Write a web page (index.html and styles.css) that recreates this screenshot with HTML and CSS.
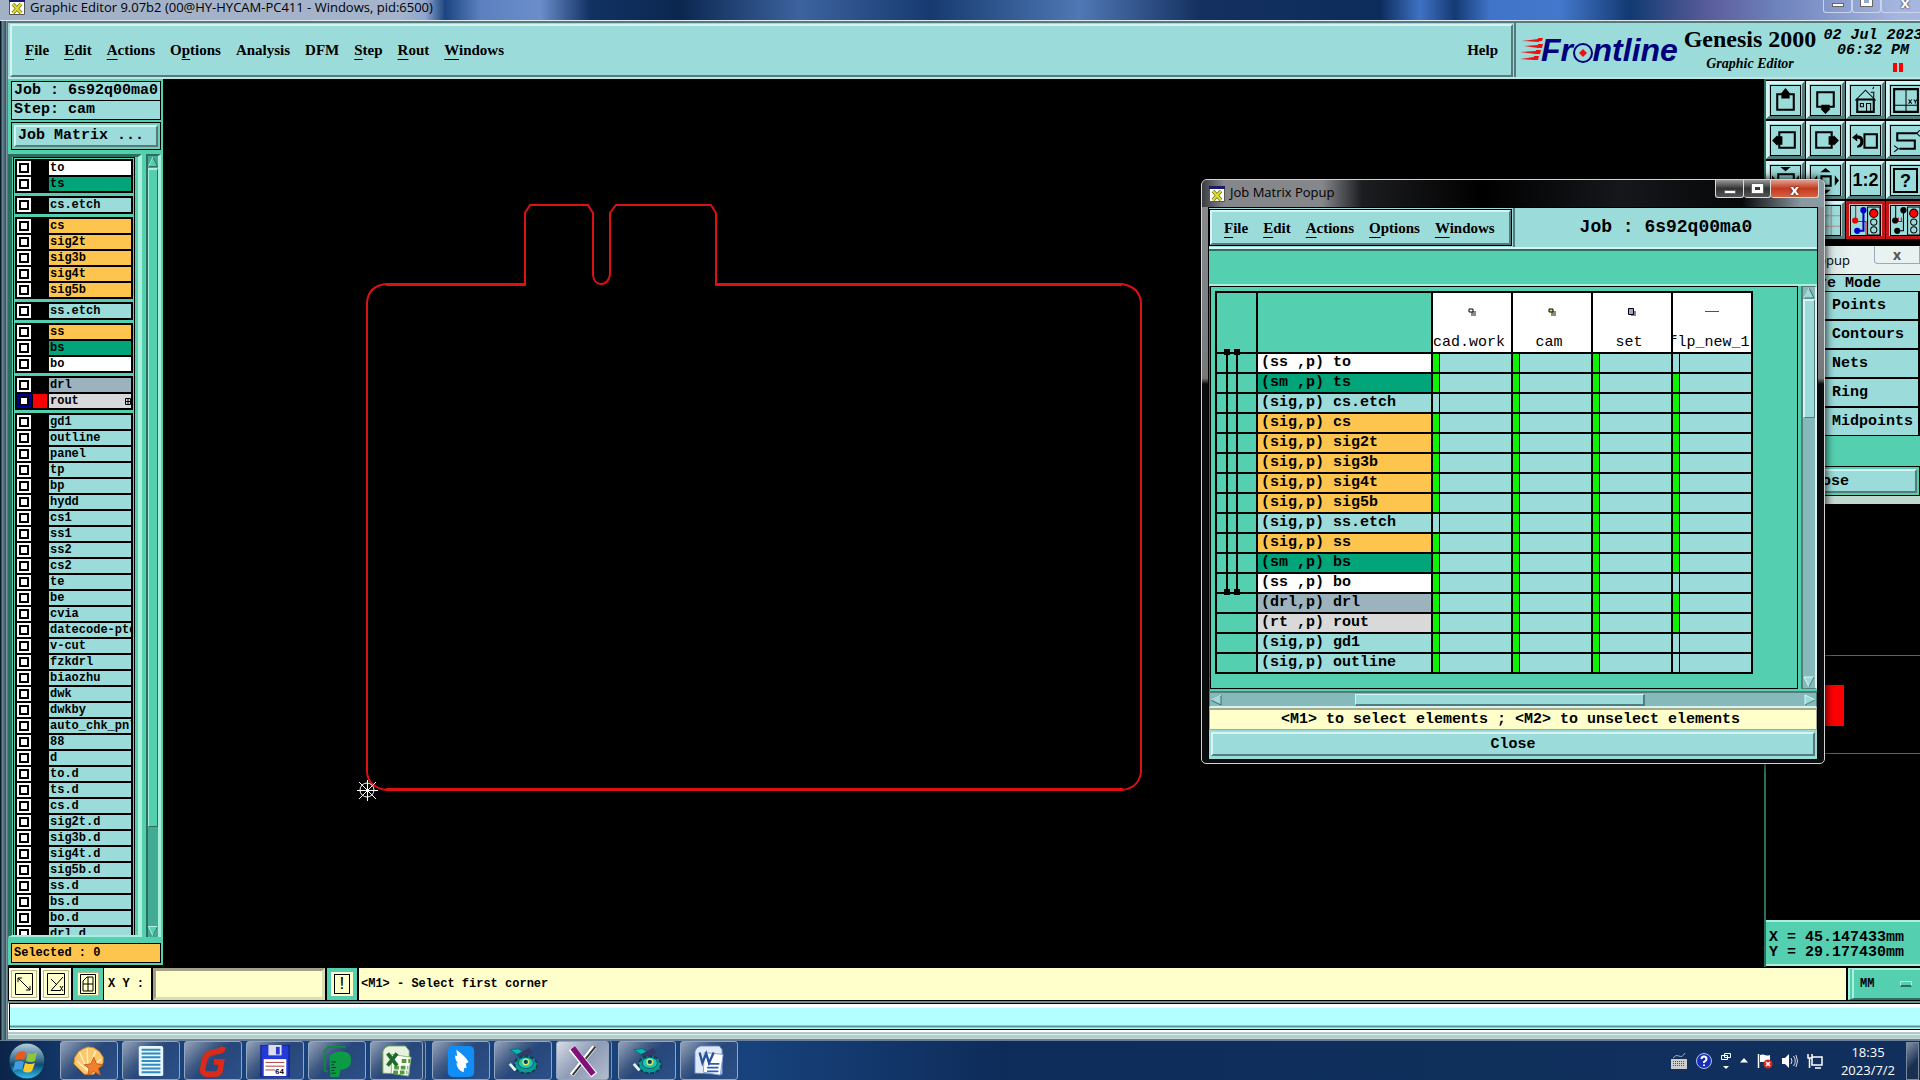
FILE: index.html
```html
<!DOCTYPE html>
<html lang="en">
<head>
<meta charset="utf-8">
<title>Graphic Editor</title>
<link rel="stylesheet" href="styles.css">
</head>
<body>
<svg class="defs" aria-hidden="true">
  <defs>
    <linearGradient id="orb" x1="0" y1="0" x2="0" y2="1"><stop offset="0" stop-color="#b9cfdd"/><stop offset=".45" stop-color="#3f7493"/><stop offset=".6" stop-color="#0f4a70"/><stop offset="1" stop-color="#2fc4f5"/></linearGradient>
    <symbol id="xwin" viewBox="0 0 16 16"><path fill="#fff" stroke="#555" d="M.5.5h15v15H.5z"/><path fill="#1a1a6a" d="M0 0h16v3H0z"/><path fill="none" stroke="#777722" stroke-width="3.600" d="M4 5l8 9M12 5l-8 9"/><path fill="none" stroke="#dddd33" stroke-width="2" d="M4 5l8 9M12 5l-8 9"/></symbol>
    <symbol id="gear" viewBox="0 0 34 34"><path fill="#0bb" stroke="#076" d="M3 5l9-1 6 4-6 3z"/><path fill="#333a66" d="M10 10l14-7 3 5-12 6z"/><ellipse cx="20" cy="21" rx="12" ry="9" fill="#0a9c94" stroke="#123a55" stroke-width="2" stroke-dasharray="4 2"/><ellipse cx="20" cy="19" rx="8" ry="6" fill="#19c8b4" stroke="#0a5560"/><circle cx="20" cy="18" r="3" fill="#045" stroke="#e8e060" stroke-width="1.500"/><path stroke="#e8f4f4" stroke-width="3" d="M3 20l6 7"/></symbol>
  </defs>
</svg>

<main class="window">
  <header class="titlebar">
    <svg class="xicon" width="16" height="16"><use href="#xwin"/></svg>
    <span>Graphic Editor 9.07b2 (00@HY-HYCAM-PC411 - Windows, pid:6500)</span>
    <div class="winbtns"><button aria-label="Minimize"><i class="min"></i></button><button aria-label="Maximize"><i class="max"></i></button><button aria-label="Close">x</button></div>
  </header>

  <div class="topbar">
    <nav class="menubar">
      <button><u>F</u>ile</button><button><u>E</u>dit</button><button><u>A</u>ctions</button><button>O<u>p</u>tions</button><button>Analysis</button><button>DFM</button><button><u>S</u>tep</button><button><u>R</u>out</button><button><u>W</u>indows</button><button class="help">Help</button>
    </nav>
    <div class="brand">
      <svg class="logo" width="162" height="32" viewBox="0 0 162 32">
        <path fill="#e11" d="M2 6l16-2v-1h5l-1 3h-3v1zM4 11l14-1v-1h5l-1 4h-4zM0 17l16-1v-1h5l-1 4h-4zM0 24l14-2v-1h5l-1 4h-4z"/>
        <text x="21" y="26">Fr<tspan fill="none">o</tspan>ntline</text>
        <circle cx="63" cy="18" r="9" fill="none" stroke="#00007c" stroke-width="2"/>
        <path fill="#e11" d="M63 14l4 4-4 4-4-4z"/>
      </svg>
      <div class="product"><strong>Genesis 2000</strong><em>Graphic Editor</em></div>
      <div class="clock"><span>02 Jul 2023</span><span>06:32 PM</span><i class="pause"></i></div>
    </div>
  </div>

  <div class="work">
    <aside class="panel">
      <div class="field">Job : 6s92q00ma0</div>
      <div class="field step">Step: cam</div>
      <div class="matrixbox"><button>Job Matrix ...</button></div>
      <div class="lists">
        <div class="frame"><div class="layers">
          <div class="grp">
            <label class="ss"><input type="checkbox"><i></i><span>to</span></label>
            <label class="sm"><input type="checkbox"><i></i><span>ts</span></label>
          </div>
          <div class="grp">
            <label><input type="checkbox"><i></i><span>cs.etch</span></label>
          </div>
          <div class="grp">
            <label class="sig"><input type="checkbox"><i></i><span>cs</span></label>
            <label class="sig"><input type="checkbox"><i></i><span>sig2t</span></label>
            <label class="sig"><input type="checkbox"><i></i><span>sig3b</span></label>
            <label class="sig"><input type="checkbox"><i></i><span>sig4t</span></label>
            <label class="sig"><input type="checkbox"><i></i><span>sig5b</span></label>
          </div>
          <div class="grp">
            <label><input type="checkbox"><i></i><span>ss.etch</span></label>
          </div>
          <div class="grp">
            <label class="sig"><input type="checkbox"><i></i><span>ss</span></label>
            <label class="sm"><input type="checkbox"><i></i><span>bs</span></label>
            <label class="ss"><input type="checkbox"><i></i><span>bo</span></label>
          </div>
          <div class="grp">
            <label class="drl"><input type="checkbox"><i></i><span>drl</span></label>
            <label class="rt"><input type="checkbox" checked><i></i><span>rout<svg width="6" height="7" viewBox="0 0 6 7"><path fill="none" stroke="#000" d="M.5.5h5v6h-5zM3 0v7M0 3.500h6"/></svg></span></label>
          </div>
          <div class="grp">
            <label><input type="checkbox"><i></i><span>gd1</span></label>
            <label><input type="checkbox"><i></i><span>outline</span></label>
            <label><input type="checkbox"><i></i><span>panel</span></label>
            <label><input type="checkbox"><i></i><span>tp</span></label>
            <label><input type="checkbox"><i></i><span>bp</span></label>
            <label><input type="checkbox"><i></i><span>hydd</span></label>
            <label><input type="checkbox"><i></i><span>cs1</span></label>
            <label><input type="checkbox"><i></i><span>ss1</span></label>
            <label><input type="checkbox"><i></i><span>ss2</span></label>
            <label><input type="checkbox"><i></i><span>cs2</span></label>
            <label><input type="checkbox"><i></i><span>te</span></label>
            <label><input type="checkbox"><i></i><span>be</span></label>
            <label><input type="checkbox"><i></i><span>cvia</span></label>
            <label><input type="checkbox"><i></i><span>datecode-ptd</span></label>
            <label><input type="checkbox"><i></i><span>v-cut</span></label>
            <label><input type="checkbox"><i></i><span>fzkdrl</span></label>
            <label><input type="checkbox"><i></i><span>biaozhu</span></label>
            <label><input type="checkbox"><i></i><span>dwk</span></label>
            <label><input type="checkbox"><i></i><span>dwkby</span></label>
            <label><input type="checkbox"><i></i><span>auto_chk_pnl</span></label>
            <label><input type="checkbox"><i></i><span>88</span></label>
            <label><input type="checkbox"><i></i><span>d</span></label>
            <label><input type="checkbox"><i></i><span>to.d</span></label>
            <label><input type="checkbox"><i></i><span>ts.d</span></label>
            <label><input type="checkbox"><i></i><span>cs.d</span></label>
            <label><input type="checkbox"><i></i><span>sig2t.d</span></label>
            <label><input type="checkbox"><i></i><span>sig3b.d</span></label>
            <label><input type="checkbox"><i></i><span>sig4t.d</span></label>
            <label><input type="checkbox"><i></i><span>sig5b.d</span></label>
            <label><input type="checkbox"><i></i><span>ss.d</span></label>
            <label><input type="checkbox"><i></i><span>bs.d</span></label>
            <label><input type="checkbox"><i></i><span>bo.d</span></label>
            <label><input type="checkbox"><i></i><span>drl.d</span></label>
          </div>
        </div></div>
        <div class="vscroll green">
          <svg width="10" height="11" viewBox="0 0 10 11"><path fill="#54cfb0" stroke="#2b6f5e" d="M5 1L.5 10.500h9z"/><path fill="none" stroke="#b0f3e0" d="M5 1L.5 10.500"/></svg>
          <i class="thumb"></i><i class="trough"></i>
          <svg width="10" height="11" viewBox="0 0 10 11"><path fill="#54cfb0" stroke="#b0f3e0" d="M5 10L.5.5h9z"/><path fill="none" stroke="#2b6f5e" d="M5 10L9.500.5"/></svg>
        </div>
      </div>
      <div class="selected">Selected : 0</div>
    </aside>

    <section class="canvas">
      <svg viewBox="163 79 1601 888" preserveAspectRatio="xMinYMin meet" fill="none" stroke="#dd1111">
        <path stroke-width="3" d="M386 284.500H526M715 284.500h407M386 789.500h737"/>
        <path stroke-width="2" d="M525 285V213l5-8h58l5 8v62q1 9 8 9t9-9v-62l6-8h95l5 8v72M386 284q-18 2-19 19V772q1 15 19 18M1122 790q17-2 19-18V303q-1-16-19-19"/>
        <g stroke="#fff"><circle cx="367" cy="790" r="7"/><path d="M357 790.500h21M367.500 780v21M359 782l17 17M376 782l-17 17"/></g>
      </svg>
    </section>

    <aside class="right">
      <div class="tools">
        <button aria-label="Pan up"><svg viewBox="0 0 30 30"><path class="k" d="M7 9h16v15H7z"/><path class="f" d="M15 3l5 6h-1v4h-8V9h-1z"/></svg></button>
        <button aria-label="Pan down"><svg viewBox="0 0 30 30"><path class="k" d="M7 7h16v14H7z"/><path class="f" d="M15 28l5-5h-1v-4h-8v4h-1z"/></svg></button>
        <button aria-label="Home"><svg viewBox="0 0 30 30"><path class="n" d="M5 15L15 5l10 10M23 12V7h-3M22 4l1-2"/><path class="k" d="M7 14h16v12H7z"/><path class="n" d="M10 18h3v3h-3zM16 26v-8h4v8"/></svg></button>
        <button aria-label="Zoom window"><svg viewBox="0 0 30 30"><path class="k" d="M4 4h23v22H4z"/><path class="n" d="M15.500 4v22M4 19.500h23M18 14l3 4M21 14l-3 4M23 14l1.500 2L26 14M24.500 16v2"/></svg></button>
        <button aria-label="Pan left"><svg viewBox="0 0 30 30"><path class="k" d="M9 7h15v15H9z"/><path class="f" d="M2 15l5-5v1h5v8H7v1z"/></svg></button>
        <button aria-label="Pan right"><svg viewBox="0 0 30 30"><path class="k" d="M6 7h15v15H6z"/><path class="f" d="M28 15l-5-5v1h-5v8h5v1z"/></svg></button>
        <button aria-label="Previous view"><svg viewBox="0 0 30 30"><path class="k" d="M14 9h12v13H14z"/><path class="f" d="M2 12l5-4v2q6 0 6 6t-6 6v-2q3-1 3-4t-3-3v3z"/></svg></button>
        <button aria-label="Route"><svg viewBox="0 0 30 30"><path class="k" d="M26 8H7v7h17v8H9"/><path class="n" d="M29 5l-3 3 3 3M4 20l4 3-4 3"/></svg></button>
        <button aria-label="Zoom in"><svg viewBox="0 0 30 30"><path class="k" d="M8 9h15v13H8z"/><path class="f" d="M15 6l-5-4h10zM2 10l4 5-4 5zM28 10l-4 5 4 5z"/></svg></button>
        <button aria-label="Zoom out"><svg viewBox="0 0 30 30"><path class="k" d="M11 11h9v9h-9z"/><path class="f" d="M15 3l5 4H10zM15 28l5-4H10zM3 15l4-5v10zM28 15l-4-5v10z"/></svg></button>
        <button class="lbl"><b>1:2</b></button>
        <button class="lbl q"><b><span>?</span></b></button>
        <button aria-label="Grid"><svg viewBox="0 0 30 30"><path fill="none" stroke="#6d8f9a" d="M0 10.500h30M0 20.500h30M10.500 0v30M20.500 0v30"/></svg></button>
        <button aria-label="Grid snap"><svg viewBox="0 0 30 30"><path fill="none" stroke="#b08a8a" d="M0 10.500h30M0 20.500h30M10.500 0v30M20.500 0v30"/></svg></button>
        <button class="stop" aria-label="Net stop"><svg viewBox="0 0 30 30"><path fill="none" stroke="#e00" d="M5.500 0v16h10v14"/><path fill="none" stroke="#00c" stroke-width="2" d="M13 5v20H7"/><g fill="#00c"><circle cx="13" cy="5" r="3"/><circle cx="7" cy="25" r="3"/></g><circle cx="5" cy="15" r="3" fill="#e00"/><path class="n" d="M17 2h12v27H17z"/><circle cx="23" cy="8" r="4" fill="#f00" stroke="#000"/><g class="n"><circle cx="23" cy="16.500" r="3"/><circle cx="23" cy="24" r="3"/></g></svg></button>
        <button class="stop" aria-label="Spacing stop"><svg viewBox="0 0 30 30"><path class="n" d="M5.500 0v14M13 5v20H7"/><path stroke="#e00" fill="none" d="M6 16h6M8 12v4M11 12v4"/><circle cx="13" cy="5" r="3"/><circle cx="7" cy="25" r="3"/><circle cx="5" cy="15" r="3"/><path class="n" d="M17 2h12v27H17z"/><circle cx="23" cy="8" r="4" fill="#f00" stroke="#000"/><g class="n"><circle cx="23" cy="16.500" r="3"/><circle cx="23" cy="24" r="3"/></g></svg></button>
      </div>
      <div class="overview"><svg viewBox="0 0 154 678" preserveAspectRatio="xMinYMin meet"><path fill="#f00" d="M20 444h58v41H20z"/><path stroke="#477a2c" fill="none" d="M0 414.500h154M0 512.500h154"/></svg></div>
      <div class="coords"><span>X = 45.147433mm</span><span>Y = 29.177430mm</span></div>
    </aside>
  </div>

  <div class="entry">
    <button class="mode" aria-label="Absolute"><svg viewBox="0 0 20 24"><path class="n" d="M1.500 1.500h17v21h-17zM4 6l12 12M4 10V6h4M16 14v4h-4"/></svg></button>
    <button class="mode" aria-label="Angle"><svg viewBox="0 0 20 24"><path class="n" d="M1.500 1.500h17v21h-17zM17 5L5 18.500h9M5 7l6 6M14 14l3 5M17 14l-3 5"/></svg></button>
    <button class="mode on" aria-label="Grid snap"><svg viewBox="0 0 20 24"><path class="n" d="M2.500 2.500h15v19h-15zM5 9l4-4h6v14H5zM10 5v14M5 12h10"/></svg></button>
    <label for="xy">X Y :</label>
    <input id="xy" type="text">
    <button class="bang"><b>!</b></button>
    <output>&lt;M1&gt; - Select first corner</output>
    <button class="units">MM<i></i></button>
  </div>
  <div class="status"><div></div></div>
</main>

<section class="pop mode-pop">
  <header><span>Mode Popup</span><button aria-label="Close">x</button></header>
  <h2>Measure Mode</h2>
  <button>Points</button><button>Contours</button><button>Nets</button><button>Ring</button><button>Midpoints</button>
  <footer><button>Close</button></footer>
</section>

<section class="pop matrix">
  <header><svg class="xicon" width="16" height="16"><use href="#xwin"/></svg><span>Job Matrix Popup</span>
    <div class="winbtns"><button aria-label="Minimize"><i class="min"></i></button><button aria-label="Maximize"><i class="max"></i></button><button class="close" aria-label="Close">x</button></div>
  </header>
  <div class="body">
    <div class="mrow">
      <nav><button><u>F</u>ile</button><button><u>E</u>dit</button><button><u>A</u>ctions</button><button><u>O</u>ptions</button><button><u>W</u>indows</button></nav>
      <div class="job">Job : 6s92q00ma0</div>
    </div>
    <div class="band"></div>
    <div class="sheet">
      <div class="tablebox">
        <table>
          <colgroup><col class="c1"><col class="c2"><col><col><col><col></colgroup>
          <thead><tr><th></th><th></th>
            <th scope="col"><svg width="8" height="8" viewBox="0 0 8 8"><path fill="#888" d="M3 3h5v5H3z"/><path fill="#fff" stroke="#000" d="M1 1h4v3H1z"/></svg><span>cad.work</span></th>
            <th scope="col"><svg width="8" height="8" viewBox="0 0 8 8"><path fill="#888" d="M3 3h5v5H3z"/><path fill="#dd4" stroke="#000" d="M1 1h4v3H1z"/></svg><span>cam</span></th>
            <th scope="col"><svg width="8" height="8" viewBox="0 0 8 8"><path fill="#888" d="M3 3h5v5H3z"/><path fill="#b79ad0" stroke="#000" d="M.5.5h5v6h-5z"/></svg><span>set</span></th>
            <th scope="col"><svg width="14" height="8" viewBox="0 0 14 8"><path stroke="#b22" d="M0 3.500h14"/></svg><span>flp_new_1</span></th></tr></thead>
          <tbody>
            <tr class="ss"><td></td><th scope="row">(ss ,p) to</th><td class="g"></td><td class="g"></td><td class="g"></td><td></td></tr>
            <tr class="sm"><td></td><th scope="row">(sm ,p) ts</th><td class="g"></td><td class="g"></td><td class="g"></td><td class="g"></td></tr>
            <tr><td></td><th scope="row">(sig,p) cs.etch</th><td></td><td class="g"></td><td class="g"></td><td class="g"></td></tr>
            <tr class="sig"><td></td><th scope="row">(sig,p) cs</th><td class="g"></td><td class="g"></td><td class="g"></td><td class="g"></td></tr>
            <tr class="sig"><td></td><th scope="row">(sig,p) sig2t</th><td class="g"></td><td class="g"></td><td class="g"></td><td class="g"></td></tr>
            <tr class="sig"><td></td><th scope="row">(sig,p) sig3b</th><td class="g"></td><td class="g"></td><td class="g"></td><td class="g"></td></tr>
            <tr class="sig"><td></td><th scope="row">(sig,p) sig4t</th><td class="g"></td><td class="g"></td><td class="g"></td><td class="g"></td></tr>
            <tr class="sig"><td></td><th scope="row">(sig,p) sig5b</th><td class="g"></td><td class="g"></td><td class="g"></td><td class="g"></td></tr>
            <tr><td></td><th scope="row">(sig,p) ss.etch</th><td></td><td class="g"></td><td class="g"></td><td class="g"></td></tr>
            <tr class="sig"><td></td><th scope="row">(sig,p) ss</th><td class="g"></td><td class="g"></td><td class="g"></td><td class="g"></td></tr>
            <tr class="sm"><td></td><th scope="row">(sm ,p) bs</th><td class="g"></td><td class="g"></td><td class="g"></td><td class="g"></td></tr>
            <tr class="ss"><td></td><th scope="row">(ss ,p) bo</th><td class="g"></td><td class="g"></td><td class="g"></td><td></td></tr>
            <tr class="drl"><td></td><th scope="row">(drl,p) drl</th><td class="g"></td><td class="g"></td><td class="g"></td><td class="g"></td></tr>
            <tr class="rt"><td></td><th scope="row">(rt ,p) rout</th><td class="g"></td><td class="g"></td><td class="g"></td><td class="g"></td></tr>
            <tr><td></td><th scope="row">(sig,p) gd1</th><td class="g"></td><td class="g"></td><td class="g"></td><td></td></tr>
            <tr><td></td><th scope="row">(sig,p) outline</th><td class="g"></td><td class="g"></td><td class="g"></td><td></td></tr>
          </tbody>
        </table>
        <svg class="span" width="40" height="382" viewBox="0 0 40 382"><path d="M8 58h6v6H8zM18 58h6v6h-6zM10 61h2v240h-2zM20 61h2v240h-2zM8 298h6v6H8zM18 298h6v6h-6z"/></svg>
      </div>
      <div class="vscroll cyan">
        <svg width="12" height="12" viewBox="0 0 12 12"><path fill="#9bdbda" stroke="#466" d="M6 1L1 11h10z"/><path fill="none" stroke="#d8f8f8" d="M6 1L1 11"/></svg>
        <i class="thumb"></i><i class="trough"></i>
        <svg width="12" height="12" viewBox="0 0 12 12"><path fill="#9bdbda" stroke="#d8f8f8" d="M6 11L1 1h10z"/><path fill="none" stroke="#466" d="M6 11L11 1"/></svg>
      </div>
    </div>
    <div class="hscroll">
      <svg width="12" height="12" viewBox="0 0 12 12"><path fill="#9bdbda" stroke="#466" d="M1 6L11 1v10z"/><path fill="none" stroke="#d8f8f8" d="M1 6L11 1"/></svg>
      <i class="thumb"></i>
      <svg width="12" height="12" viewBox="0 0 12 12"><path fill="#9bdbda" stroke="#d8f8f8" d="M11 6L1 1v10z"/><path fill="none" stroke="#466" d="M1 11L11 6"/></svg>
    </div>
    <p>&lt;M1&gt; to select elements ; &lt;M2&gt; to unselect elements</p>
    <div class="closebox"><button>Close</button></div>
  </div>
</section>

<footer class="taskbar">
  <button class="start" aria-label="Start"><svg width="38" height="38" viewBox="0 0 38 38"><circle cx="19" cy="19" r="18" fill="url(#orb)" stroke="#0b2c4a"/><path fill="#e8581f" d="M9 11q5-3 9-1l-2 8q-4-2-9 0z"/><path fill="#8fc53a" d="M20 11q5 2 9-1l-2 9q-4 2-9 0z"/><path fill="#3f9fe0" d="M7 20q5-2 9 0l-2 8q-5-2-9 1z"/><path fill="#fbc92c" d="M17 21q5 2 10 0l-3 8q-4 3-9 0z"/></svg></button>
  <nav class="apps">
    <button aria-label="Shell"><svg viewBox="0 0 34 34"><path fill="#fbc86b" stroke="#d98d2b" d="M12 31L1 20l1-7 4-6 5-3 5-2 6 1 6 4 4 6v6L22 31z"/><path stroke="#fff0c8" stroke-width="1.500" d="M16 28L4 17M16 28L7 8M16 28L15 4M16 28L24 6M16 28l14-13"/><path fill="#f08030" stroke="#c85a10" d="M22 13l3 7 7 1-5 4 2 7-7-4-6 4 1-7-5-4 7-1z"/></svg></button>
    <button aria-label="Notes"><svg viewBox="0 0 34 34"><rect x="4" y="1" width="26" height="32" rx="2" fill="#e8f6fc"/><path stroke="#2f8cbd" stroke-width="2" d="M7 5h20M7 9h20M7 13h20M7 17h20M7 21h20M7 25h20M7 29h20"/></svg></button>
    <button aria-label="G"><svg viewBox="0 0 34 34"><path fill="none" stroke="#d92a1a" stroke-width="6" d="M28 2q-1 5-8 5-9 1-12 8L6 26q0 5 5 5h8q5 0 6-6l1-7h-8"/></svg></button>
    <button aria-label="Save"><svg viewBox="0 0 34 34"><path fill="#2339d8" stroke="#0a1870" d="M2 0h30v34H2z"/><path fill="#dde" d="M10 0h14v11H10z"/><path fill="#2339d8" d="M18 2h4v8h-4z"/><path fill="#fff" d="M5 15h24v18H5z"/><path stroke="#a33" d="M7 18.500h20M7 22.500h20M7 26.500h10"/><text x="17" y="31" font-size="8">64</text></svg></button>
    <button aria-label="P"><svg viewBox="0 0 34 34"><path fill="none" stroke="#0d8a3f" stroke-width="2" d="M4 28V6l4-4h18M4 28h3"/><path fill="#0d9a44" d="M9 12q4-5 13-5 10 0 10 9t-9 10h-2l-2 8h-9z"/><path stroke="#124" d="M11 18h5M11 21h3M11 24h5M11 27h3M11 30h5"/></svg></button>
    <button class="stack" aria-label="Excel"><svg viewBox="0 0 34 34"><path fill="#e8f3df" stroke="#6c9d4e" d="M2 30V7q1-5 6-6h18l4 5v25z"/><path fill="#fff" stroke="#8ab56d" d="M11 10l21 3-3 20-18-3z"/><path stroke="#4f9a3c" stroke-width="4" stroke-dasharray="5 2" d="M14 24h15M13 29h15M22 17h9"/><path stroke="#1d6b2a" stroke-width="4" d="M7 9l10 13M17 9L7 22"/></svg></button>
    <button aria-label="Feather"><svg viewBox="0 0 34 34"><rect x="3" y="1" width="28" height="33" rx="5" fill="#118df5"/><path fill="#fff" d="M12 5q10 7 13 13l-3 2 1 4-3 1v4q-7-2-8-10l2 1q-4-5-3-9l2 1z"/></svg></button>
    <button aria-label="Camera tool"><svg viewBox="0 0 34 34"><use href="#gear"/></svg></button>
    <button class="stack active" aria-label="X server"><svg viewBox="0 0 34 34"><path stroke="#fff" stroke-width="5" d="M29 2L5 32"/><path stroke="#333" stroke-width="2" d="M30 2L6 32"/><path stroke="#fff" stroke-width="8" d="M5 3l24 29"/><path stroke="#80107a" stroke-width="6" d="M6 3l22 28"/></svg></button>
    <button aria-label="Camera tool"><svg viewBox="0 0 34 34"><use href="#gear"/></svg></button>
    <button aria-label="Word"><svg viewBox="0 0 34 34"><path fill="#dfe9f8" stroke="#5a7fc0" d="M2 30V7q1-5 6-6h20l3 4v26z"/><path fill="#fff" stroke="#7d9bd0" d="M12 8l20 2-3 22-18-3z"/><path stroke="#2b5fb0" stroke-width="2" d="M16 20h12M15 24h12M15 28h12"/><path stroke="#24519e" stroke-width="2.500" fill="none" d="M7 8l3 11 4-10 3 10 5-11"/></svg></button>
  </nav>
  <div class="tray">
    <svg width="16" height="16" viewBox="0 0 16 16"><path fill="#ccc" d="M0 6h16v10H0z"/><path stroke="#556" stroke-dasharray="1 1" d="M2 8.500h12M2 10.500h12M2 12.500h12"/><path fill="none" stroke="#aaa" d="M2 5q3-4 6-2t6-3"/></svg>
    <svg width="16" height="16" viewBox="0 0 16 16"><circle cx="8" cy="8" r="7.500" fill="#1530b8" stroke="#b8c4e8"/><path fill="none" stroke="#fff" stroke-width="2" d="M5.500 6q0-2.500 2.500-2.500T10.500 6q0 1.500-2.500 3v1M8 11.500v1.500"/></svg>
    <svg width="10" height="18" viewBox="0 0 10 18"><path fill="none" stroke="#fff" d="M3.500 1.500h6v4h-6zM.5 3.500h6v4h-6z"/><path fill="#fff" d="M2 14h6l-3 3z"/></svg>
    <svg width="8" height="5" viewBox="0 0 8 5"><path fill="#fff" d="M0 4.500h8L4 0z"/></svg>
    <svg width="16" height="16" viewBox="0 0 16 16"><path stroke="#fff" stroke-width="1.500" d="M1.500 1v14"/><path fill="#fff" d="M3 2q3-1 5 0t5 0v7H3z"/><circle cx="11" cy="11" r="4.500" fill="#d8281c"/><path stroke="#fff" stroke-width="1.500" d="M9 9l4 4M13 9l-4 4"/></svg>
    <svg width="16" height="16" viewBox="0 0 16 16"><path fill="#fff" d="M0 5h3l4-4v14l-4-4H0z"/><path fill="none" stroke="#dde" d="M9 5q2 3 0 6M11.500 3q3.500 5 0 10M14 2q3 6 0 12"/></svg>
    <svg width="16" height="16" viewBox="0 0 16 16"><path fill="none" stroke="#fff" stroke-width="1.500" d="M5 4h10v8H5zM8 15h6M2.500 5v10M1 1v4h4V1"/></svg>
    <div class="time"><span>18:35</span><span>2023/7/2</span></div>
    <button class="desk" aria-label="Show desktop"></button>
  </div>
</footer>
</body>
</html>
```
FILE: styles.css
```css
* { box-sizing: border-box; }
:root {
  --cyan: #9bdbda;
  --lite: #d6f4f3;
  --dark: #547c7c;
  --green: #54cfb0;
  --glite: #a9f0da;
  --gdark: #2b6f5e;
  --orange: #fdc54e;
  --cream: #ffffcc;
  --mono: "Liberation Mono", "DejaVu Sans Mono", monospace;
  --serif: "Liberation Serif", serif;
  --ui: "Open Sans", sans-serif;
}
body { margin: 0; height: 100vh; overflow: hidden; display: flex; flex-direction: column; background: #000; color: #000; font: bold 15px/18px var(--mono); }
button { margin: 0; padding: 0; border: 0; background: none; font: inherit; color: inherit; }
i { font-style: normal; display: block; }
svg { display: block; flex: none; }
.defs { position: absolute; width: 0; height: 0; }
.n { fill: none; stroke: #000; stroke-width: 1; }
.k { fill: none; stroke: #000; stroke-width: 2; }
.f { fill: #000; }

.window { flex: 1; min-height: 0; display: flex; flex-direction: column; padding-left: 8px; overflow: hidden; background: linear-gradient(90deg, #0a1a24 0 1px, #6a8a9a 2px, #34505c 6px, #c4d4d8 7px, #111 8px); }

.titlebar { flex: none; height: 21px; margin-left: -8px; padding: 0 0 7px 9px; display: flex; align-items: center; gap: 5px; border-bottom: 1px solid #dfe8ee; font: 13px/14px var(--ui);
  background: linear-gradient(90deg, #a3b1c6 0, #a5b4cb 400px, #8fa6cf 425px, #1c4580 445px, #5c80bf 480px, #6b8ecb 540px, #123263 590px, #0b2750 680px, #3d639f 800px, #163a70 930px, #4f78b4 1080px, #143060 1200px, #0c2c5c 1380px, #3f72c4 1420px, #153a73 1455px, #3f74c8 1490px, #4478cc 1560px, #123a72 1630px, #5b5d9b 1710px, #6f84bd 1780px, #a6b6e0 1900px); }
.titlebar .xicon { margin-top: 1px; }
.titlebar .winbtns { margin: -9px -9px 0 auto; }
.winbtns { display: flex; }
.winbtns button { width: 29px; height: 21px; border: 1px solid #c8d4ec; border-top: 0; border-radius: 0 0 3px 3px; display: flex; align-items: center; justify-content: center; color: #fff; font: bold 15px/14px var(--ui); text-shadow: 0 0 2px #000; }
.winbtns button:last-child { width: 48px; }
.min { width: 12px; height: 4px; margin-top: 6px; background: #fff; border: 1px solid #666; }
.max { width: 11px; height: 9px; border: 3px solid #fff; outline: 1px solid #666; }

.topbar { flex: none; display: flex; height: 58px; border-top: 2px solid var(--dark); background: var(--cyan); border-bottom: 2px solid #bfe6e6; }
.menubar { flex: 1; display: flex; align-items: center; gap: 15px; margin: 1px 1px 0 2px; padding: 0 13px 2px; border: 2px solid var(--lite); border-right-color: var(--dark); border-bottom-color: var(--dark); font: bold 15px/18px var(--serif); }
.help { margin-left: auto; }
u { text-underline-offset: 4px; text-decoration-thickness: 1px; }
.brand { width: 406px; flex: none; display: flex; border-left: 2px solid var(--dark); overflow: hidden; white-space: nowrap; }
.logo { margin: 12px 0 0 4px; }
.logo text { font: italic bold 32px/32px "Liberation Sans", sans-serif; fill: #00007c; }
.product { width: 136px; display: flex; flex-direction: column; align-items: center; flex: none; }
.product strong { font: bold 24px/28px var(--serif); padding-top: 2px; }
.product em { font: italic bold 14px/18px var(--serif); padding-top: 2px; }
.clock { flex: none; width: 100px; margin-left: 5px; padding-top: 5px; display: flex; flex-direction: column; font-style: italic; line-height: 15px; }
.clock span { text-align: center; }
.pause { width: 10px; height: 9px; margin: 5px 0 0 70px; border: solid #f00; border-width: 0 4px; }

.work { flex: 1; min-height: 0; display: flex; background: #000; }
.panel { flex: none; width: 155px; margin-bottom: 2px; padding: 2px 0; display: flex; flex-direction: column; background: var(--green); }
.field { flex: none; height: 20px; margin: 0 2px 0 3px; padding-left: 2px; border: 1px solid #000; background: var(--cyan); white-space: nowrap; overflow: hidden; }
.step { margin-top: -1px; }
.matrixbox { flex: none; margin: 2px 2px 4px 3px; padding: 2px; height: 28px; border: 1px solid #000; background: #6fd0b5; }
.matrixbox button { width: 100%; height: 22px; padding-left: 2px; text-align: left; background: var(--cyan); border: 2px solid var(--lite); border-right-color: var(--dark); border-bottom-color: var(--dark); }
.lists { flex: 1; min-height: 0; display: flex; gap: 4px; padding-right: 2px; }
.frame { width: 134px; padding: 0 3px 0 1px; border: solid var(--gdark); border-width: 3px 4px 2px 4px; border-right-color: var(--glite); border-bottom-color: var(--glite); overflow: hidden; }
.layers { height: 100%; overflow: hidden; padding: 1px 1px 0; border: 1px solid #000; border-bottom: 0; display: flex; flex-direction: column; gap: 3px; font-size: 12px; line-height: 13px; }
.grp { flex: none; padding: 1px 2px; background: #000; }
.grp label { display: flex; gap: 2px; padding: 1px 0; }
.grp input { appearance: none; width: 14px; height: 14px; margin: 0; background: #fff; border: 2px solid #fff; box-shadow: inset 0 0 0 2px #000; flex: none; }
.grp input:checked { background: #fff; border-color: #000098; box-shadow: inset 0 0 0 2px #001; }
.grp i { width: 14px; flex: none; }
.grp input:checked + i { background: #f00; }
.grp span { flex: 1; height: 14px; padding-left: 1px; background: var(--cyan); white-space: nowrap; overflow: hidden; display: flex; justify-content: space-between; align-items: center; }
.ss span, .ss th { background: #fff; }
.sm span, .sm th { background: #02a47a; }
.sig span, .sig th { background: var(--orange); }
.drl span, .drl th { background: #9cb3bd; }
.rt span, .rt th { background: #d9d9d9; }
.vscroll { display: flex; flex-direction: column; align-items: center; }
.green { flex: 1; border: solid var(--gdark); border-width: 2px 2px 0; border-right: 3px solid var(--glite); background: #43ab94; }
.green .thumb { width: 100%; flex: 86; margin-top: 1px; background: var(--green); border: solid var(--glite); border-width: 2px 0 0 1px; border-right: 1px solid var(--gdark); border-bottom: 1px solid var(--gdark); }
.green .trough { flex: 13; }
.selected { flex: none; height: 20px; margin: 6px 2px 0 3px; padding-left: 2px; border: 1px solid #000; background: var(--orange); font-size: 12px; }

.canvas { flex: 1; min-width: 0; overflow: hidden; }
.canvas svg { width: 100%; height: 100%; }
.right { flex: none; width: 156px; display: flex; flex-direction: column; border-left: 2px solid var(--gdark); overflow: hidden; }
.tools { flex: none; width: 160px; display: grid; grid-template-columns: repeat(4, 40px); grid-auto-rows: 40px; border-top: 1px solid var(--gdark); padding-top: 1px; }
.tools button { width: 39px; height: 38px; display: flex; align-items: center; justify-content: center; background: var(--cyan); border: 3px solid var(--lite); border-right-color: var(--dark); border-bottom-color: var(--dark); }
.tools svg, .lbl b { width: 31px; height: 31px; outline: 1px solid #000; outline-offset: -1px; }
.tools .stop { border-color: #c01818; background: #d9b0b0; }
.stop svg { background: var(--cyan); }
.tools .lbl { font: bold 18px/31px "Liberation Sans", sans-serif; }
.lbl b { text-align: center; }
.q span { display: block; margin: 3px auto; width: 25px; height: 25px; line-height: 22px; border: 2px solid #000; }
.overview { flex: 1; min-height: 0; overflow: hidden; }
.overview svg { width: 100%; height: 100%; }
.coords { flex: none; height: 46px; margin-bottom: 1px; padding: 8px 0 0 3px; background: var(--green); border-top: 2px solid var(--glite); border-bottom: 2px solid var(--glite); display: flex; flex-direction: column; line-height: 15px; }

.entry { flex: none; height: 34px; display: flex; gap: 2px; padding: 1px 0 1px 1px; background: #000; font-size: 12px; line-height: 32px; }
.entry > * { background: var(--cream); }
.mode { width: 30px; display: flex; align-items: center; justify-content: center; border: 2px solid #ffe; box-shadow: inset 0 0 0 1px #b8b88c; }
.mode svg { width: 22px; height: 24px; }
.entry .on, .bang { border: 4px solid var(--green); }
.entry label { width: 47px; margin-left: -1px; padding-left: 4px; }
.entry input { width: 172px; padding: 0 4px; font: inherit; border: 3px solid #a2a287; border-right-color: #dcdcae; border-bottom-color: #dcdcae; outline: 0; }
.bang { width: 30px; display: flex; align-items: center; justify-content: center; }
.bang b { width: 16px; height: 20px; border: 1px solid #000; font: 18px/18px var(--mono); text-align: center; }
.entry output { flex: 1; padding-left: 2px; }
.entry .units { width: 72px; display: flex; align-items: center; gap: 26px; padding-left: 6px; background: var(--green); border: 2px solid var(--glite); border-left-width: 6px; border-left-style: double; border-right: 0; border-bottom-color: var(--gdark); }
.units i { width: 12px; height: 6px; border: 1px solid var(--glite); border-bottom: 2px solid var(--gdark); }
.status { flex: none; height: 39px; padding: 2px 0 10px 1px; background: linear-gradient(#6e9090 0 2px, #fff 3px 31px, #789090 32px, #dff 33px, #a9c6c2 35px, #c8dcd6 38px, #223 39px); }
.status div { height: 27px; border: 1px solid #000; border-right: 0; background: linear-gradient(#fff 0 3px, #b3ffff 4px 21px, #5c9494 22px 23px, #b3ffff 24px); }

.pop { position: absolute; display: flex; flex-direction: column; }
.pop header { display: flex; font: 13px/24px var(--ui); white-space: nowrap; }
.mode-pop { top: 244px; right: 0; width: 150px; height: 260px; border-top: 2px solid #000; border-bottom: 8px solid #c2d8ce; background: var(--green); overflow: hidden; }
.mode-pop header { height: 28px; justify-content: flex-end; background: linear-gradient(90deg, #9bb, #e8f2f0 80px); gap: 24px; }
.mode-pop header span { line-height: 28px; }
.mode-pop header button { width: 46px; height: 18px; border: 1px solid #9ab; border-top: 0; border-radius: 0 0 0 4px; color: #555; font: bold 14px/14px var(--ui); }
.mode-pop h2 { margin: 0; height: 17px; padding-left: 3px; font: inherit; line-height: 17px; background: var(--cyan); border-top: 1px solid #000; white-space: nowrap; }
.mode-pop > button { height: 29px; padding-left: 62px; text-align: left; background: var(--cyan); border: 1px solid #000; border-width: 1px 2px 1px 0; line-height: 27px; }
.mode-pop footer { margin-top: auto; padding: 2px; border: 1px solid #000; }
.mode-pop footer button { width: 100%; height: 24px; padding-left: 29px; text-align: left; background: var(--cyan); border: 2px solid var(--lite); border-right-color: var(--dark); border-bottom-color: var(--dark); line-height: 22px; }

.matrix { top: 179px; left: 1201px; width: 624px; padding: 0 6px 4px; border: 1px solid #d0d4d6; border-radius: 6px 6px 5px 5px; box-shadow: 0 0 10px #000; background: linear-gradient(#888c90 0, #777c80 30%, #777 34%, #0a0c0e 35%); overflow: hidden; }
.matrix header { margin: 0 -6px; height: 27px; padding: 0 5px 0 7px; gap: 5px; background: linear-gradient(90deg, #3a3d40 0, #85878a 22px, #85878a 120px, #1c1d20 160px, #000 280px, #15171b 420px, #060708 540px, #8a9aa2 600px); }
.matrix header .xicon { margin-top: 6px; }
.matrix .winbtns { margin: 0 0 0 auto; }
.matrix .winbtns button { height: 18px; background: linear-gradient(#999, #333 50%, #555); border-color: #d8dcdc; }
.matrix .winbtns button + button { width: 27px; border-left: 0; }
.matrix .winbtns .close.close { width: 48px; background: linear-gradient(#e0a090, #c23a20 50%, #d86040); }
.body { background: var(--cyan); border: 1px solid #000; border-width: 1px 1px 0; }
.mrow { display: flex; height: 41px; border-bottom: 2px solid var(--lite); }
.mrow nav { display: flex; gap: 15px; align-items: center; margin: 2px 2px 2px 1px; width: 301px; padding: 0 12px; border: 2px solid var(--lite); border-right-color: var(--dark); border-bottom-color: var(--dark); outline: 1px solid #000; font: bold 15px/18px var(--serif); }
.job { flex: 1; border-left: 2px solid var(--dark); font-size: 18px; line-height: 38px; text-align: center; }
.band { height: 37px; background: var(--green); border-top: 2px solid var(--gdark); border-bottom: 2px solid var(--glite); }
.sheet { display: flex; height: 405px; background: var(--green); border-left: 1px solid #2b6f5e; }
.tablebox { position: relative; width: 591px; margin-bottom: 2px; padding: 4px; border: 1px solid #000; }
table { width: 538px; table-layout: fixed; border-collapse: collapse; }
.c1 { width: 41px; }
.c2 { width: 175px; }
td, th { height: 20px; padding: 0; border: 2px solid #000; overflow: hidden; white-space: nowrap; text-align: left; font-weight: bold; line-height: 18px; }
tbody th { padding-left: 3px; }
tbody tr:not([class]) th { background: var(--cyan); }
tbody td { background: linear-gradient(90deg, var(--cyan) 6px, #000 6px 7px, var(--cyan) 7px); }
tbody td:first-child { background: none; }
tbody td.g { background: linear-gradient(90deg, #0cf400 6px, #000 6px 7px, var(--cyan) 7px); }
thead th { height: 61px; vertical-align: bottom; }
thead th[scope] { background: #fff; font-weight: normal; }
thead span { display: flex; justify-content: center; padding-right: 6px; }
thead svg { margin: 0 auto 18px; }
.span { position: absolute; left: 5px; top: 4px; }
.cyan { width: 16px; margin: 0 0 2px 3px; border: solid var(--dark); border-width: 1px 2px 1px 2px; border-right-color: var(--lite); background: #86b9ba; }
.cyan .thumb { width: 100%; height: 119px; background: var(--cyan); border: 2px solid var(--lite); border-width: 2px 1px 1px 2px; border-right-color: var(--dark); border-bottom-color: var(--dark); }
.cyan .trough { flex: 1; }
.hscroll { height: 17px; display: flex; align-items: center; justify-content: space-between; background: #86b9ba; border: solid var(--dark); border-width: 2px 1px; border-bottom-color: var(--lite); }
.hscroll .thumb { width: 290px; height: 12px; background: var(--cyan); border: 2px solid var(--lite); border-width: 1px 2px 2px 1px; border-right-color: var(--dark); border-bottom-color: var(--dark); margin-left: -26px; }
.matrix p { margin: 0; height: 22px; border: solid #a9a98a; border-width: 2px 1px 1px; background: var(--cream); line-height: 20px; text-align: center; padding-right: 5px; }
.closebox { height: 29px; padding: 2px 2px 3px; }
.closebox button { width: 100%; height: 24px; border: 2px solid var(--lite); border-right-color: var(--dark); border-bottom-color: var(--dark); background: var(--cyan); line-height: 22px; }

.taskbar { flex: none; height: 40px; display: flex; align-items: center; border-top: 1px solid #6a7f98; background: linear-gradient(90deg, #0b2448, #17427c 100px, #17427c 750px, #0e2c5a 1000px, #10305c 1500px, #122f5c); }
.start { margin: 0 14px 0 8px; }
.apps { display: flex; gap: 4px; }
.apps button { width: 58px; height: 39px; display: flex; align-items: center; justify-content: center; border: 1px solid #93a5bf; border-radius: 3px; background: linear-gradient(135deg, #95a3ba, #3f5a83 35%, #28477a 50%, #2b5088); }
.apps svg { width: 32px; height: 32px; }
.apps .stack { width: 53px; margin-right: 5px; box-shadow: 2px 0 0 #22446f, 3px 0 0 #8293ad; }
.apps .active { background: linear-gradient(135deg, #d8dce6, #8d9bb4 50%, #b2bccd); }
.tray { margin-left: auto; display: flex; align-items: center; gap: 9px; color: #fff; }
.time { width: 72px; display: flex; flex-direction: column; align-items: center; font: 13px/18px var(--ui); }
.desk { width: 13px; height: 38px; margin: 0 1px 0 -7px; border: 1px solid #7788a0; background: linear-gradient(135deg, #8090a8, #1a3050 60%); }
```
